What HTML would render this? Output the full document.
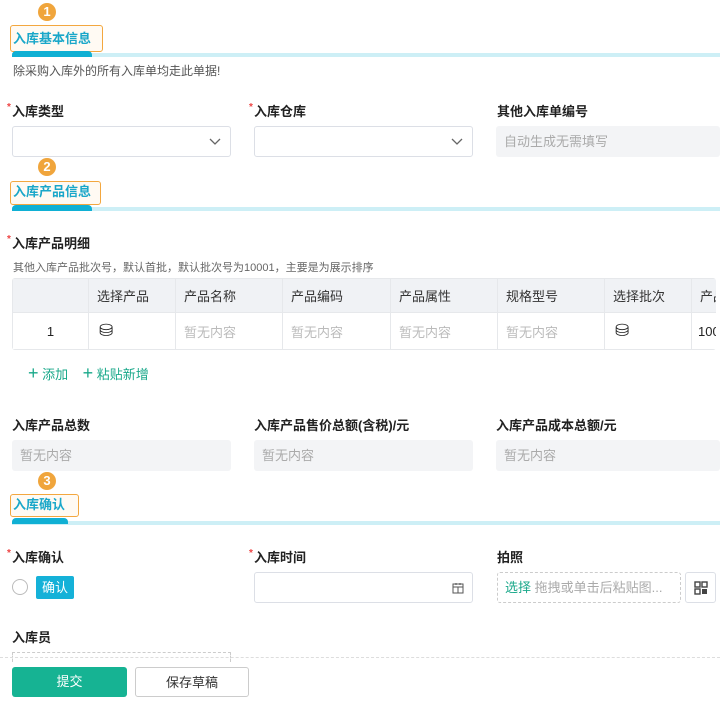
<!DOCTYPE html>
<html><head><meta charset="utf-8"><style>
*{margin:0;padding:0;box-sizing:border-box}
body{width:720px;height:701px;background:#fff;position:relative;overflow:hidden;font-family:"Liberation Sans","Noto Sans CJK SC",sans-serif;color:#222}
.a{position:absolute;white-space:nowrap}
.num{position:absolute;width:18px;height:18px;border-radius:50%;background:#f0a53c;color:#fff;font-size:13px;font-weight:bold;line-height:18px;text-align:center}
.box{position:absolute;border:1.5px solid #f3a73f;border-radius:3px;background:#fffaf3;color:#1aa7c9;font-size:13px;font-weight:bold;padding-left:2px}
.lt{position:absolute;left:12px;right:0;height:4px;background:#cdeff6}
.dk{position:absolute;left:12px;height:6px;background:#10b0d4;border-radius:4px 4px 0 0}
.lbl{position:absolute;font-size:13px;font-weight:bold;color:#222;line-height:16px}
.lbl i{position:absolute;left:-5px;top:-1px;color:#e44;font-style:normal;font-size:10px;line-height:10px}
.in{position:absolute;height:31px;border:1px solid #dcdfe6;border-radius:3px;background:#fff}
.gr{position:absolute;height:31px;background:#f3f4f6;border-radius:3px;color:#aaa;font-size:13px;line-height:31px;padding-left:8px}
.ph{color:#bbb;font-size:13px}
.tw{position:absolute;left:12px;top:278px;width:704px;overflow:hidden;border-radius:3px}
table{border-collapse:collapse;font-size:13px;table-layout:fixed;width:740px}
td{border:1px solid #e6e8eb;height:37px;padding-left:8px;overflow:hidden;white-space:nowrap}
.hd td{background:#f0f2f5;height:34px;color:#333}
.btn{position:absolute;height:30px;border-radius:3px;font-size:13px;text-align:center;line-height:30px}
</style></head><body>
<div class="num" style="left:38px;top:3px">1</div>
<div class="box" style="left:10px;top:25px;width:93px;height:27px;line-height:21px;padding-top:2px">入库基本信息</div>
<div class="lt" style="top:53px"></div><div class="dk" style="top:51px;width:80px"></div>
<div class="a" style="left:13px;top:62px;font-size:12px;color:#555">除采购入库外的所有入库单均走此单据!</div>

<div class="lbl" style="left:12px;top:104px"><i>*</i>入库类型</div>
<div class="lbl" style="left:254px;top:104px"><i>*</i>入库仓库</div>
<div class="lbl" style="left:497px;top:104px">其他入库单编号</div>
<div class="in" style="left:12px;top:126px;width:219px"><svg class="a" style="right:9px;top:11px" width="12" height="8"><path d="M1 1l5 5 5-5" stroke="#666" fill="none" stroke-width="1.3"/></svg></div>
<div class="in" style="left:254px;top:126px;width:219px"><svg class="a" style="right:9px;top:11px" width="12" height="8"><path d="M1 1l5 5 5-5" stroke="#666" fill="none" stroke-width="1.3"/></svg></div>
<div class="gr" style="left:496px;top:126px;width:224px">自动生成无需填写</div>

<div class="num" style="left:38px;top:158px">2</div>
<div class="box" style="left:10px;top:181px;width:91px;height:24px;line-height:18px;padding-top:1px">入库产品信息</div>
<div class="lt" style="top:207px"></div><div class="dk" style="top:205px;width:80px"></div>

<div class="lbl" style="left:12px;top:236px"><i>*</i>入库产品明细</div>
<div class="a" style="left:13px;top:259px;font-size:11px;color:#666">其他入库产品批次号，默认首批，默认批次号为10001，主要是为展示排序</div>
<div class="tw"><table>
<colgroup><col style="width:76px"><col style="width:87px"><col style="width:107px"><col style="width:108px"><col style="width:107px"><col style="width:107px"><col style="width:87px"><col style="width:61px"></colgroup>
<tr class="hd"><td></td><td>选择产品</td><td>产品名称</td><td>产品编码</td><td>产品属性</td><td>规格型号</td><td>选择批次</td><td>产品</td></tr>
<tr><td style="text-align:center;padding:0">1</td><td style="font-size:17px;padding-left:10px">⛁</td><td class="ph">暂无内容</td><td class="ph">暂无内容</td><td class="ph">暂无内容</td><td class="ph">暂无内容</td><td style="font-size:17px;padding-left:10px">⛁</td><td style="padding-left:6px">100</td></tr>
</table></div>
<div class="a" style="left:28px;top:363px;font-size:13px;color:#19a88a"><b style="font-size:18px;font-weight:normal">+</b> 添加 &nbsp;&nbsp; <b style="font-size:18px;font-weight:normal">+</b> 粘贴新增</div>

<div class="lbl" style="left:12px;top:418px">入库产品总数</div>
<div class="lbl" style="left:254px;top:418px">入库产品售价总额(含税)/元</div>
<div class="lbl" style="left:496px;top:418px">入库产品成本总额/元</div>
<div class="gr" style="left:12px;top:440px;width:219px">暂无内容</div>
<div class="gr" style="left:254px;top:440px;width:219px">暂无内容</div>
<div class="gr" style="left:496px;top:440px;width:224px">暂无内容</div>

<div class="num" style="left:38px;top:472px">3</div>
<div class="box" style="left:10px;top:494px;width:69px;height:23px;line-height:17px;padding-top:1px">入库确认</div>
<div class="lt" style="top:521px"></div><div class="dk" style="top:518px;width:56px"></div>

<div class="lbl" style="left:12px;top:550px"><i>*</i>入库确认</div>
<div class="lbl" style="left:254px;top:550px"><i>*</i>入库时间</div>
<div class="lbl" style="left:497px;top:550px">拍照</div>
<div class="a" style="left:12px;top:579px;width:16px;height:16px;border:1px solid #bbb;border-radius:50%"></div>
<div class="a" style="left:36px;top:576px;width:38px;height:23px;background:#15b1d8;color:#fff;font-size:13px;line-height:23px;text-align:center;border-radius:2px">确认</div>
<div class="in" style="left:254px;top:572px;width:219px;height:31px"><svg class="a" style="right:8px;top:9px" width="12" height="12"><rect x="1" y="2" width="10" height="9" fill="none" stroke="#555"/><path d="M1 5h10M6 5v6M4 1v2M8 1v2" stroke="#555"/></svg></div>
<div class="a" style="left:497px;top:572px;width:184px;height:31px;border:1px dashed #ccc;border-radius:3px;font-size:13px;line-height:29px;padding-left:7px"><span style="color:#19a88a">选择</span> <span style="color:#aaa">拖拽或单击后粘贴图...</span></div>
<div class="a" style="left:685px;top:572px;width:31px;height:31px;border:1px solid #dcdfe6;border-radius:3px"><svg class="a" style="left:8px;top:8px" width="14" height="14"><rect x="1" y="1" width="5" height="5" fill="none" stroke="#444" stroke-width="1.4"/><rect x="8" y="1" width="5" height="5" fill="none" stroke="#444" stroke-width="1.4"/><rect x="1" y="8" width="5" height="5" fill="none" stroke="#444" stroke-width="1.4"/><rect x="8" y="8" width="5" height="5" fill="#444"/></svg></div>

<div class="lbl" style="left:12px;top:630px">入库员</div>
<div class="a" style="left:12px;top:652px;width:219px;height:10px;border:1px dashed #ccc;border-bottom:none"></div>
<div class="a" style="left:0;right:0;top:657px;border-top:1px dashed #ddd"></div>
<div class="btn" style="left:12px;top:667px;width:115px;background:#16b393;color:#fff">提交</div>
<div class="btn" style="left:135px;top:667px;width:114px;border:1px solid #ccc;color:#333">保存草稿</div>
</body></html>
